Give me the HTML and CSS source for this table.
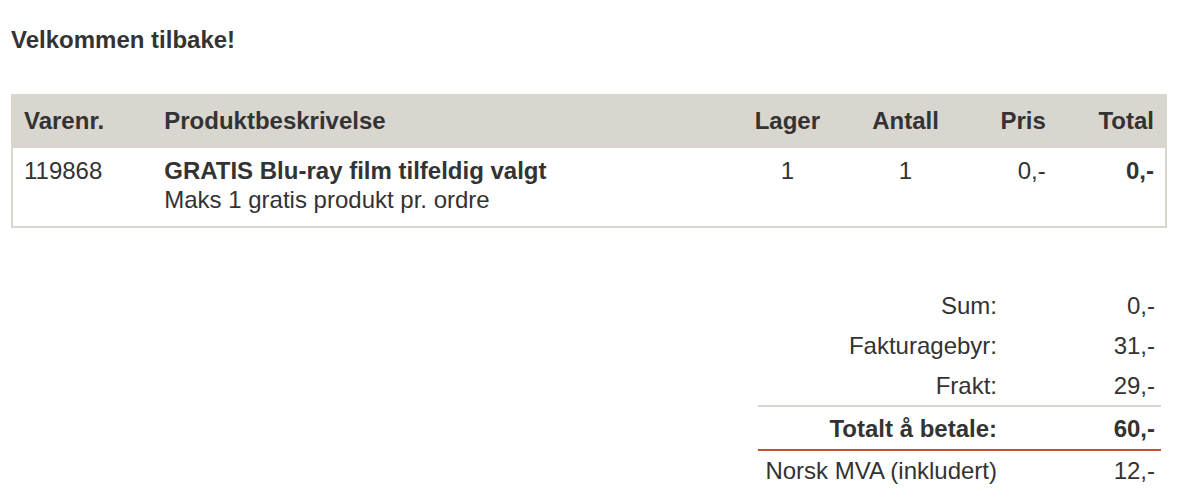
FILE: index.html
```html
<!DOCTYPE html>
<html lang="no">
<head>
<meta charset="utf-8">
<title>Handlekurv</title>
<link rel="stylesheet" href="styles.css">
</head>
<body>
<div class="page">
  <h1 class="welcome">Velkommen tilbake!</h1>
  <table class="cart">
    <colgroup>
      <col class="c-nr"><col class="c-desc"><col class="c-stock"><col class="c-qty"><col class="c-price"><col class="c-total">
    </colgroup>
    <thead>
      <tr>
        <th class="left">Varenr.</th>
        <th class="left">Produktbeskrivelse</th>
        <th class="center">Lager</th>
        <th class="center">Antall</th>
        <th class="right">Pris</th>
        <th class="right">Total</th>
      </tr>
    </thead>
    <tbody>
      <tr>
        <td class="left">119868</td>
        <td class="left"><strong>GRATIS Blu-ray film tilfeldig valgt</strong><br>Maks 1 gratis produkt pr. ordre</td>
        <td class="center">1</td>
        <td class="center">1</td>
        <td class="right">0,-</td>
        <td class="right"><strong>0,-</strong></td>
      </tr>
    </tbody>
  </table>
  <div class="summary-wrap">
    <table class="summary">
      <tr class="row"><td class="label">Sum:</td><td class="value">0,-</td></tr>
      <tr class="row"><td class="label">Fakturagebyr:</td><td class="value">31,-</td></tr>
      <tr class="row last"><td class="label">Frakt:</td><td class="value">29,-</td></tr>
      <tr class="grand"><td class="label">Totalt å betale:</td><td class="value">60,-</td></tr>
      <tr class="vat"><td class="label">Norsk MVA (inkludert)</td><td class="value">12,-</td></tr>
    </table>
  </div>
</div>
</body>
</html>
```

FILE: styles.css
```css
html, body {
  margin: 0;
  padding: 0;
  background: #ffffff;
}

body {
  font-family: "Liberation Sans", Arial, sans-serif;
  font-size: 24px;
  line-height: 29px;
  color: #333333;
}

.page {
  padding: 25px 14px 0 11px;
}

.welcome {
  margin: 0 0 40px 0;
  font-size: 24px;
  line-height: 29px;
  font-weight: bold;
}

.cart {
  width: 1156px;
  border-collapse: collapse;
  table-layout: fixed;
  border: 2px solid #d9d6d0;
}

.c-nr { width: 141px; }
.c-desc { width: 574px; }
.c-stock { width: 118px; }
.c-qty { width: 118px; }
.c-price { width: 92px; }
.c-total { width: 109px; }

.cart th {
  background: #d9d6d0;
  font-weight: bold;
  padding: 10px 11px 13px 11px;
  vertical-align: top;
}

.cart td {
  padding: 8px 11px 12px 11px;
  vertical-align: top;
}

.cart strong { font-weight: bold; }

.left { text-align: left; }
.center { text-align: center; }
.right { text-align: right; }

.summary-wrap {
  display: flex;
  justify-content: flex-end;
  margin: 58px 6px 0 0;
}

.summary {
  width: 403px;
  border-collapse: collapse;
}

.summary td {
  padding: 5px 0 6px 0;
  text-align: right;
}

.summary .label {
  width: 239px;
  padding-right: 8px;
}

.summary .value {
  padding-right: 6px;
}

.summary .last td {
  padding-bottom: 5px;
}

.summary .grand td {
  border-top: 2px solid #d9d6d0;
  border-bottom: 2px solid #c8502d;
  font-weight: bold;
  padding-top: 7px;
  padding-bottom: 6px;
}

.summary .vat td {
  padding-top: 5px;
}
```
